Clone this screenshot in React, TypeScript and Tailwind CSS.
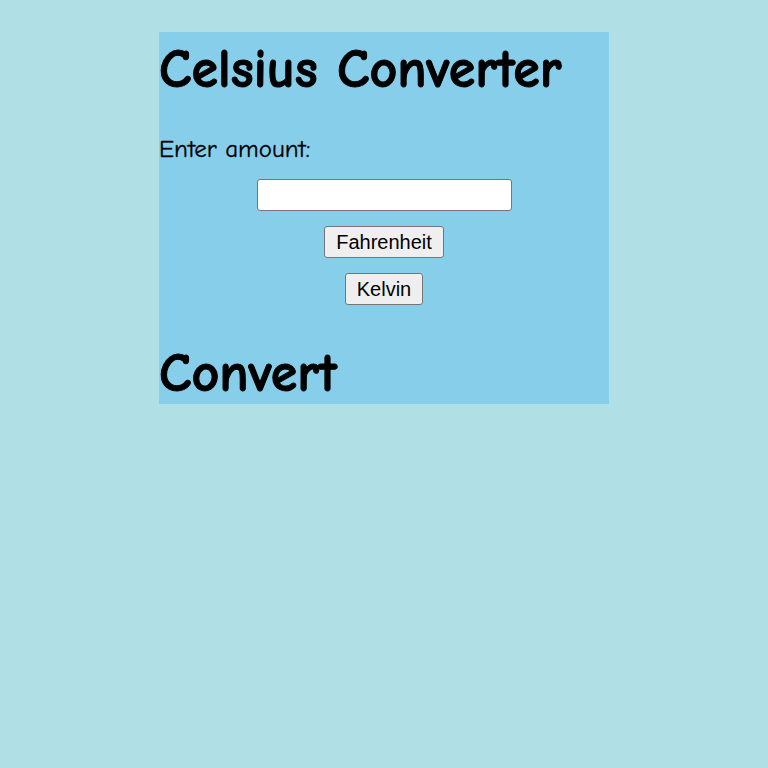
export default function App() {
  return (
    <div className="min-h-screen bg-[#b0e0e6] pt-[32px]">
      <div className="mx-auto w-[450px] bg-[#87ceeb] text-black" style={{ fontFamily: '"Comic Sans MS", "Comic Neue", cursive' }}>
        <h1 className="pt-[4px] text-[54px] font-bold leading-[68px] [-webkit-text-stroke:1px_black]">Celsius Converter</h1>
        <p className="mt-[30px] text-[25px] leading-[30px] [-webkit-text-stroke:0.3px_black]">Enter amount:</p>
        <div className="flex flex-col items-center">
          <input type="text" className="mt-[15px] w-[255px] h-[32px] bg-white border border-[#767676] rounded-[3px]" />
          <button className="mt-[15px] h-[32px] px-[11px] bg-[#efefef] border border-[#767676] rounded-[3px] text-[20px]" style={{ fontFamily: '"Liberation Sans", Arial, sans-serif' }}>Fahrenheit</button>
          <button className="mt-[15px] h-[32px] px-[11px] bg-[#efefef] border border-[#767676] rounded-[3px] text-[20px]" style={{ fontFamily: '"Liberation Sans", Arial, sans-serif' }}>Kelvin</button>
        </div>
        <h1 className="mt-[28px] pt-[10px] text-[54px] font-bold leading-[61px] [-webkit-text-stroke:1px_black]">Convert</h1>
      </div>
    </div>
  );
}
